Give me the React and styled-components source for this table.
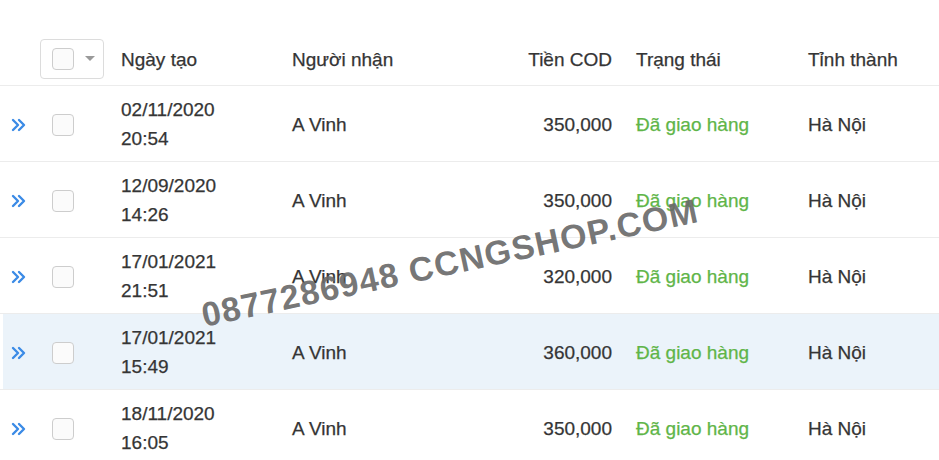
import React from 'react';
import styled, { createGlobalStyle } from 'styled-components';

const rows = [
  { date: '02/11/2020', time: '20:54', name: 'A Vinh', cod: '350,000', status: 'Đã giao hàng', city: 'Hà Nội' },
  { date: '12/09/2020', time: '14:26', name: 'A Vinh', cod: '350,000', status: 'Đã giao hàng', city: 'Hà Nội' },
  { date: '17/01/2021', time: '21:51', name: 'A Vinh', cod: '320,000', status: 'Đã giao hàng', city: 'Hà Nội' },
  { date: '17/01/2021', time: '15:49', name: 'A Vinh', cod: '360,000', status: 'Đã giao hàng', city: 'Hà Nội', active: true },
  { date: '18/11/2020', time: '16:05', name: 'A Vinh', cod: '350,000', status: 'Đã giao hàng', city: 'Hà Nội' },
];

const Expand = () => (
  <svg width="15" height="14" viewBox="0 0 15 14" fill="none" stroke="#3b8be6" strokeWidth="2.4" strokeLinecap="round" strokeLinejoin="round">
    <polyline points="2,2 7,7 2,12" />
    <polyline points="8,2 13,7 8,12" />
  </svg>
);

const App = () => {
  return (
    <>
      <GlobalStyle />
      <Wrapper>
        <HeaderRow>
          <Cell />
          <CheckCell $header>
            <BulkSelect>
              <Box />
              <Caret />
            </BulkSelect>
          </CheckCell>
          <Cell>Ngày tạo</Cell>
          <Cell>Người nhận</Cell>
          <Cell $right>Tiền COD</Cell>
          <Cell>Trạng thái</Cell>
          <Cell>Tỉnh thành</Cell>
        </HeaderRow>
        {rows.map((r, i) => (
          <Row key={i} $active={r.active}>
            <IconCell>
              <Expand />
            </IconCell>
            <CheckCell>
              <Box />
            </CheckCell>
            <Cell>
              <DateText>
                {r.date}
                <br />
                {r.time}
              </DateText>
            </Cell>
            <Cell>{r.name}</Cell>
            <Cell $right>{r.cod}</Cell>
            <Cell $green>{r.status}</Cell>
            <Cell>{r.city}</Cell>
          </Row>
        ))}
        <Watermark>0877286948 CCNGSHOP.COM</Watermark>
      </Wrapper>
    </>
  );
};

export default App;

const GlobalStyle = createGlobalStyle`
  body {
    margin: 0;
    background: #fff;
    overflow: hidden;
    font-family: "Liberation Sans", Arial, sans-serif;
  }
`;

const Wrapper = styled.div`
  position: relative;
  width: 939px;
  color: #353535;
  font-size: 19px;
  -webkit-text-stroke: 0.25px currentColor;
`;

const HeaderRow = styled.div`
  display: grid;
  grid-template-columns: 36px 73px 171px 220px 124px 172px 143px;
  align-items: center;
  height: 52px;
  padding-top: 33px;
  border-bottom: 1px solid #ececec;
`;

const Row = styled.div`
  display: grid;
  grid-template-columns: 36px 73px 171px 220px 124px 172px 143px;
  align-items: center;
  height: 75px;
  border-bottom: 1px solid #ececec;
  background: ${(p) =>
    p.$active ? 'linear-gradient(to right, transparent 3px, #ebf3fa 3px)' : '#fff'};
`;

const Cell = styled.div`
  padding: 2px 12px 0;
  text-align: ${(p) => (p.$right ? 'right' : 'left')};
  color: ${(p) => (p.$green ? '#5fb548' : 'inherit')};
  white-space: nowrap;
`;

const IconCell = styled.div`
  display: flex;
  justify-content: center;
  padding-left: 1px;
  padding-top: 2px;
`;

const CheckCell = styled.div`
  display: flex;
  padding-left: ${(p) => (p.$header ? '4px' : '16px')};
  padding-top: ${(p) => (p.$header ? '0' : '2px')};
`;

const BulkSelect = styled.div`
  display: flex;
  align-items: center;
  gap: 11px;
  box-sizing: border-box;
  width: 64px;
  height: 40px;
  padding-left: 11px;
  border: 1px solid #dcdcdc;
  border-radius: 4px;
  background: #fff;
`;

const Box = styled.span`
  display: block;
  box-sizing: border-box;
  width: 22px;
  height: 22px;
  border: 1px solid #cdcdcd;
  border-radius: 4px;
  background: #fbfbfb;
`;

const Caret = styled.span`
  width: 0;
  height: 0;
  border-left: 5px solid transparent;
  border-right: 5px solid transparent;
  border-top: 5px solid #9a9a9a;
  margin-top: -2px;
`;

const DateText = styled.div`
  line-height: 29px;
  margin-top: -1px;
`;

const Watermark = styled.div`
  position: absolute;
  left: 450px;
  top: 263px;
  transform: translate(-50%, -50%) rotate(-12deg);
  white-space: nowrap;
  font-size: 34px;
  font-weight: bold;
  letter-spacing: 1.2px;
  color: rgba(105, 105, 105, 0.92);
  -webkit-text-stroke: 0;
  pointer-events: none;
`;
